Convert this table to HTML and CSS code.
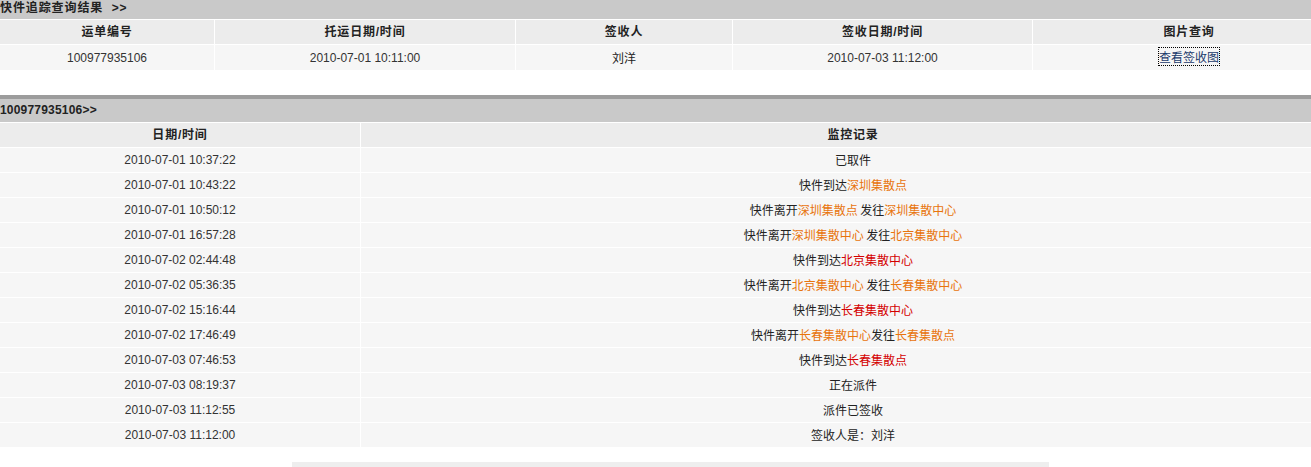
FILE: index.html
```html
<!DOCTYPE html>
<html>
<head>
<meta charset="utf-8">
<link rel="stylesheet" href="styles.css">
</head>
<body>
<div class="title title-top">快件追踪查询结果&nbsp; &gt;&gt;</div>
<table class="grid summary">
  <colgroup>
    <col class="c1"><col class="c2"><col class="c3"><col class="c4"><col class="c5">
  </colgroup>
  <tr class="head"><th>运单编号</th><th>托运日期/时间</th><th>签收人</th><th>签收日期/时间</th><th>图片查询</th></tr>
  <tr><td>100977935106</td><td>2010-07-01 10:11:00</td><td class="cn">刘洋</td><td>2010-07-03 11:12:00</td><td><a class="pic" href="#">查看签收图</a></td></tr>
</table>

<div class="title title-detail">100977935106&gt;&gt;</div>
<table class="grid detail">
  <colgroup><col class="d1"><col class="d2"></colgroup>
  <tr class="head"><th>日期/时间</th><th>监控记录</th></tr>
  <tr><td>2010-07-01 10:37:22</td><td class="cn">已取件</td></tr>
  <tr><td>2010-07-01 10:43:22</td><td class="cn">快件到达<span class="o">深圳集散点</span></td></tr>
  <tr><td>2010-07-01 10:50:12</td><td class="cn">快件离开<span class="o">深圳集散点</span> 发往<span class="o">深圳集散中心</span></td></tr>
  <tr><td>2010-07-01 16:57:28</td><td class="cn">快件离开<span class="o">深圳集散中心</span> 发往<span class="o">北京集散中心</span></td></tr>
  <tr><td>2010-07-02 02:44:48</td><td class="cn">快件到达<span class="r">北京集散中心</span></td></tr>
  <tr><td>2010-07-02 05:36:35</td><td class="cn">快件离开<span class="o">北京集散中心</span> 发往<span class="o">长春集散中心</span></td></tr>
  <tr><td>2010-07-02 15:16:44</td><td class="cn">快件到达<span class="r">长春集散中心</span></td></tr>
  <tr><td>2010-07-02 17:46:49</td><td class="cn">快件离开<span class="o">长春集散中心</span>发往<span class="o">长春集散点</span></td></tr>
  <tr><td>2010-07-03 07:46:53</td><td class="cn">快件到达<span class="r">长春集散点</span></td></tr>
  <tr><td>2010-07-03 08:19:37</td><td class="cn">正在派件</td></tr>
  <tr><td>2010-07-03 11:12:55</td><td class="cn">派件已签收</td></tr>
  <tr><td>2010-07-03 11:12:00</td><td class="cn">签收人是：刘洋</td></tr>
</table>
<div class="footer-bar"></div>
</body>
</html>
```

FILE: styles.css
```css
html, body {
  margin: 0;
  padding: 0;
  background: #fff;
  overflow: hidden;
}
body {
  font-family: "Liberation Sans", Arial, "Noto Sans CJK SC", sans-serif;
  font-size: 12px;
  color: #333;
}
.title {
  background: #c9c9c9;
  font-weight: bold;
  color: #222;
}
.title-top {
  height: 19px;
  line-height: 16px;
  letter-spacing: 0.9px;
}
.title-detail {
  margin-top: 24px;
  border-top: 4px solid #9c9c9c;
  height: 23px;
  line-height: 23px;
  letter-spacing: 0.2px;
}
.grid {
  border-collapse: separate;
  border-spacing: 1px;
  margin: 0 0 0 -1px;
  width: 1347px;
  table-layout: fixed;
}
.grid th, .grid td {
  text-align: center;
  padding: 0;
  height: 24px;
  line-height: 24px;
  white-space: nowrap;
}
.grid th {
  background: #ececec;
  font-weight: bold;
  color: #222;
  letter-spacing: 0.8px;
}
.grid td {
  background: #f6f6f6;
  color: #333;
}
.c1 { width: 214px; }
.c2 { width: 300px; }
.c3 { width: 216px; }
.c4 { width: 299px; }
.c5 { width: auto; }
.d1 { width: 360px; }
.d2 { width: auto; }
.cn {
  font-family: "Noto Sans CJK SC", sans-serif;
}
.grid td.cn { color: #222; }
.o { color: #e8740c; }
.r { color: #d40000; }
.pic {
  color: #1b3a6b;
  text-decoration: none;
  outline: 1px dotted #000;
  font-family: "Noto Sans CJK SC", sans-serif;
}
.footer-bar {
  margin: 14px 0 0 292px;
  width: 757px;
  height: 10px;
  background: #eeeeee;
}
```
